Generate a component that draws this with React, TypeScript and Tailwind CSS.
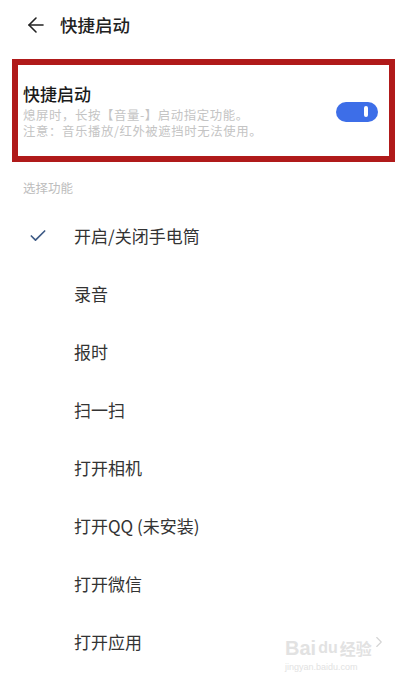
import { ArrowLeft, Check, ChevronRight } from "lucide-react";

const font = { fontFamily: '"Noto Sans CJK SC", "Noto Sans", sans-serif' };

const items = [
    "开启/关闭手电筒",
    "录音",
    "报时",
    "扫一扫",
    "打开相机",
    "打开QQ (未安装)",
    "打开微信",
    "打开应用",
];

const App = () => {
    return (
        <div className="w-[401px] h-[683px] bg-white overflow-hidden relative" style={font}>
            <header className="h-[50px] flex items-center pl-[24px]">
                <ArrowLeft className="w-[24px] h-[24px] text-[#222]" strokeWidth={1.6} />
                <h1 className="ml-[12px] text-[17.5px] text-[#222] font-medium">快捷启动</h1>
            </header>

            <section className="ml-[12px] mr-[6px] mt-[9px] h-[103px] border-[6px] border-[#b01a1a] flex items-center pl-[5px] pr-[11px]">
                <div className="flex-1">
                    <div className="text-[17px] text-[#1a1a1a] font-medium leading-[22px]">快捷启动</div>
                    <p className="text-[12.4px] tracking-[0.6px] text-[#c4c4c4] leading-[16px] mt-[2px]">
                        熄屏时，长按【音量-】启动指定功能。
                    </p>
                    <p className="text-[12.4px] tracking-[0.6px] text-[#c4c4c4] leading-[16px]">
                        注意：音乐播放/红外被遮挡时无法使用。
                    </p>
                </div>
                <div className="w-[42px] h-[20px] rounded-full bg-[#3d6ee8] flex items-center justify-end pr-[10px] mt-[2px]">
                    <span className="w-[4px] h-[11px] rounded-full bg-white" />
                </div>
            </section>

            <div className="mt-[18px] pl-[23px] text-[12.5px] text-[#bdbdbd] leading-[16px]">选择功能</div>

            <ul className="mt-[11px]">
                {items.map((item, i) => (
                    <li key={item} className="h-[58px] flex items-center">
                        <span className="w-[74px] flex justify-center pl-[2px]">
                            {i === 0 && <Check className="w-[20px] h-[20px] text-[#3e5b86]" strokeWidth={2} />}
                        </span>
                        <span className="text-[17px] text-[#333]">{item}</span>
                    </li>
                ))}
            </ul>

            <div className="absolute left-[285px] top-[638px] text-[#e2e2e2] leading-none">
                <div className="flex items-center gap-[2px] text-[20px] font-bold" style={{ fontFamily: '"Liberation Sans", sans-serif' }}>
                    <span>Bai</span>
                    <span className="text-[16px]">du</span>
                    <span className="text-[16px]" style={font}>经验</span>
                </div>
                <div className="text-[9px] mt-[5px]" style={{ fontFamily: '"Liberation Sans", sans-serif' }}>jingyan.baidu.com</div>
            </div>
            <ChevronRight className="absolute left-[370px] top-[632px] w-[18px] h-[20px] text-[#d4d4d4]" strokeWidth={1.5} />
        </div>
    );
};

export default App;
